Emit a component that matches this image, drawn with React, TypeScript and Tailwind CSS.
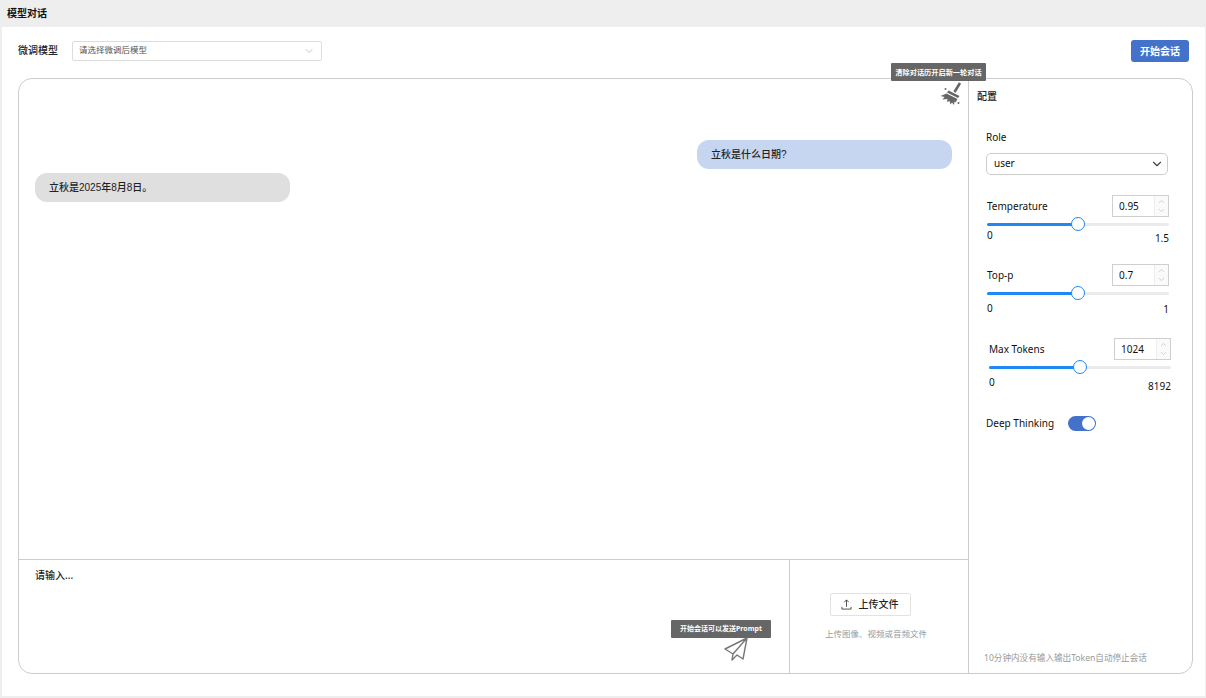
import React from 'react';
import { ChevronDown, ChevronUp } from 'lucide-react';

const font = "font-['Noto_Sans','Noto_Sans_CJK_SC',sans-serif]";

interface SliderRowProps {
  label: string;
  value: string;
  max: string;
  percent: number;
  className: string;
  labelsClass: string;
  maxClass: string;
}

// number input + slider + min/max labels
const SliderRow: React.FC<SliderRowProps> = ({ label, value, max, percent, className, labelsClass, maxClass }) => {
  return (
    <div className={`w-[182px] ${className}`}>
      <div className="flex items-center justify-between h-[22px]">
        <span className="text-[10px] text-[#111]">{label}</span>
        <div className="flex w-[57px] h-[22px] border border-[#cfcfcf] bg-white">
          <span className="flex-1 pl-[6px] text-[10px] leading-[20px] text-[#111]">{value}</span>
          <div className="w-[14px] flex flex-col items-center justify-center border-l border-[#eeeeee] bg-[#fafafa] text-[#c4c4c4]">
            <ChevronUp size={9} />
            <ChevronDown size={9} />
          </div>
        </div>
      </div>
      <div className="relative h-[3px] mt-[6px] rounded-full bg-[#ebebeb]">
        <div className="h-full rounded-full bg-[#1e88f5]" style={{ width: `${percent}%` }} />
        <div
          className="absolute top-[-6px] ml-[-7px] w-[14px] h-[14px] rounded-full bg-white border border-[#1e88f5]"
          style={{ left: `${percent}%` }}
        />
      </div>
      <div className={`flex justify-between text-[10px] text-[#111] h-[14px] ${labelsClass}`}>
        <span className="leading-[12px]">0</span>
        <span className={`leading-[12px] ${maxClass}`}>{max}</span>
      </div>
    </div>
  );
};

const Tooltip: React.FC<{ text: string; className: string }> = ({ text, className }) => (
  <div className={`absolute h-[18px] flex items-center justify-center rounded-[1px] bg-[#666666] text-white font-bold whitespace-nowrap ${className}`}>
    {text}
  </div>
);

const BroomIcon = () => (
  <svg viewBox="0 0 24 24" className="absolute left-[920px] top-[3px] w-[24px] h-[24px] text-[#666666]" fill="currentColor">
    <path d="M21 1 15.5 10" stroke="currentColor" strokeWidth="2.6" fill="none" />
    <path d="M9.5 8.5 20.5 14 19 16 8 10.5Z" />
    <path d="M7.5 11.5 18.5 17 16.5 20.5 15.5 19.5 15 23 13 20.5 11.5 22.5 10.5 19 8 20 8.5 17 3.5 17.5 5.5 15 1.5 14Z" />
    <circle cx="6.5" cy="7" r="1" />
    <circle cx="19.5" cy="21" r="1" />
  </svg>
);

const App: React.FC = () => {
  return (
    <div className={`w-[1206px] h-[698px] overflow-hidden bg-[#eeeeee] flex flex-col ${font}`}>
      <div className="h-[27px] shrink-0 pl-[7px] text-[10px] leading-[26px] font-bold text-[#111]">模型对话</div>

      <div className="flex-1 ml-[2px] mr-[1px] mb-[2px] bg-white flex flex-col pl-[16px] pr-[12px]">
        {/* toolbar */}
        <div className="h-[51px] shrink-0 flex items-center justify-between">
          <div className="flex items-center mt-[-4px]">
            <span className="w-[54px] text-[10px] font-medium text-[#222]">微调模型</span>
            <div className="w-[250px] h-[20px] flex items-center justify-between pl-[6px] pr-[6px] border border-[#dddddd] rounded-[2px]">
              <span className="text-[8.5px] text-[#555]">请选择微调后模型</span>
              <ChevronDown size={12} strokeWidth={1.4} className="text-[#aaaaaa]" />
            </div>
          </div>
          <button className="w-[58px] h-[22px] mr-[4px] mt-[-3px] rounded-[3px] bg-[#4472ca] text-white text-[10px] font-bold">
            开始会话
          </button>
        </div>

        {/* main card */}
        <div className="relative w-[1175px] h-[596px] flex border border-[#cccccc] rounded-[14px]">
          <div className="relative flex-1 flex flex-col min-w-0 border-r border-[#cccccc]">
            <Tooltip text="清除对话历开启新一轮对话" className="left-[872px] top-[-16px] w-[95px] text-[7.2px] z-10" />
            <BroomIcon />

            {/* messages */}
            <div className="flex-1 px-[16px] pt-[61px]">
              <div className="flex justify-end">
                <div className="w-[255px] h-[29px] pl-[14px] rounded-[12px] bg-[#c7d6f0] font-['Liberation_Sans','Noto_Sans_CJK_SC',sans-serif] font-medium text-[10px] leading-[29px] text-[#222]">
                  立秋是什么日期?
                </div>
              </div>
              <div className="w-[255px] h-[29px] mt-[4px] pl-[14px] rounded-[12px] bg-[#dfdfdf] font-['Liberation_Sans','Noto_Sans_CJK_SC',sans-serif] font-medium text-[10px] leading-[29px] text-[#222]">
                立秋是2025年8月8日。
              </div>
            </div>

            {/* input area */}
            <div className="h-[114px] shrink-0 flex border-t border-[#cccccc]">
              <div className="relative flex-1 pl-[16px] pt-[8px] text-[10px] leading-[14px] font-medium text-[#222] border-r border-[#cccccc]">
                请输入...
                <Tooltip text="开始会话可以发送Prompt" className="left-[652px] top-[60px] w-[100px] text-[7px]" />
                <svg
                  viewBox="0 0 24 24"
                  className="absolute left-[705px] top-[77px] w-[24px] h-[24px] text-[#777777]"
                  fill="none"
                  stroke="currentColor"
                  strokeWidth="1.4"
                  strokeLinejoin="round"
                >
                  <path d="M23 1 1 12l8 5L23 1l-4 21-6-4-5 5 1-6" />
                </svg>
              </div>
              <div className="w-[178px] shrink-0 flex flex-col items-start pt-[33px]">
                <div className="ml-[40px] w-[81px] h-[23px] flex items-center justify-center gap-[7px] pr-[2px] border border-[#e2e2e2] rounded-[2px] text-[10px] font-medium text-[#222]">
                  <svg viewBox="0 0 12 12" className="w-[11px] h-[11px] text-[#333]" fill="none" stroke="currentColor" strokeWidth="0.9">
                    <path d="M3.5 3.5 6 1l2.5 2.5M6 1v7.5M1 8.5v2.5h10V8.5" />
                  </svg>
                  上传文件
                </div>
                <div className="ml-[35px] mt-[12px] text-[8.5px] leading-[12px] text-[#999999]">上传图像、视频或音频文件</div>
              </div>
            </div>
          </div>

          {/* config panel */}
          <div className="w-[223px] shrink-0 flex flex-col relative">
            <div className="pl-[8px] pt-[10px] text-[10px] leading-[14px] font-medium text-[#222]">配置</div>
            <div className="pl-[17px] mt-[26px] text-[10px] leading-[16px] text-[#111]">Role</div>
            <div className="ml-[17px] mt-[8px] w-[182px] h-[22px] flex items-center justify-between pl-[7px] pr-[3px] border border-[#cccccc] rounded-[5px]">
              <span className="text-[10px] leading-[12px] mb-[2px] text-[#111]">user</span>
              <ChevronDown size={14} className="text-[#444444]" />
            </div>
            <SliderRow label="Temperature" value="0.95" max="1.5" percent={50} className="ml-[18px] mt-[20px]" labelsClass="mt-[3px]" maxClass="mt-[3px]" />
            <SliderRow label="Top-p" value="0.7" max="1" percent={50} className="ml-[18px] mt-[21px]" labelsClass="mt-[7px]" maxClass="mt-[1px]" />
            <SliderRow label="Max Tokens" value="1024" max="8192" percent={50} className="ml-[20px] mt-[22px]" labelsClass="mt-[7px]" maxClass="mt-[4px]" />
            <div className="flex items-center ml-[17px] mt-[26px]">
              <span className="text-[10px] text-[#111] w-[82px]">Deep Thinking</span>
              <div className="w-[28px] h-[15px] flex justify-end items-center pr-[1px] rounded-full bg-[#4472ca]">
                <div className="w-[13px] h-[13px] rounded-full bg-white" />
              </div>
            </div>
            <div className="mt-auto pl-[15px] pb-[9px] text-[8.6px] leading-[12px] text-[#999999]">10分钟内没有输入输出Token自动停止会话</div>
          </div>
        </div>
      </div>
    </div>
  );
};

export default App;
